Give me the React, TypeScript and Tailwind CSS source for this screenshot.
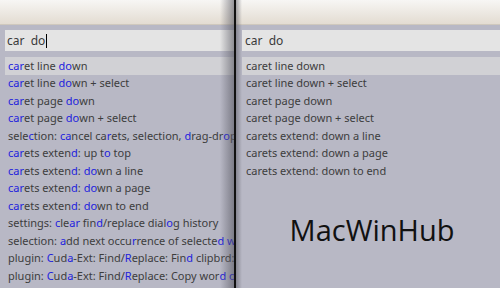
import React from "react";

type Seg = [string, boolean];

const leftItems: Seg[][] = [
  [["car", true], ["et line ", false], ["do", true], ["wn", false]],
  [["car", true], ["et line ", false], ["do", true], ["wn + select", false]],
  [["car", true], ["et page ", false], ["do", true], ["wn", false]],
  [["car", true], ["et page ", false], ["do", true], ["wn + select", false]],
  [["sele", false], ["c", true], ["tion: ", false], ["ca", true], ["ncel ca", false], ["r", true], ["ets, selection, ", false], ["d", true], ["rag-dr", false], ["o", true], ["p", false]],
  [["car", true], ["ets exten", false], ["d", true], [": up t", false], ["o", true], [" top", false]],
  [["car", true], ["ets exten", false], ["d", true], [": ", false], ["do", true], ["wn a line", false]],
  [["car", true], ["ets exten", false], ["d", true], [": ", false], ["do", true], ["wn a page", false]],
  [["car", true], ["ets exten", false], ["d", true], [": ", false], ["do", true], ["wn to end", false]],
  [["settings: ", false], ["c", true], ["le", false], ["ar", true], [" fin", false], ["d", true], ["/replace dial", false], ["o", true], ["g history", false]],
  [["selection: ", false], ["a", true], ["dd next occu", false], ["r", true], ["rence of selecte", false], ["d", true], [" ", false], ["w", true], ["ord", false]],
  [["plugin: ", false], ["C", true], ["ud", false], ["a", true], ["-Ext: Find/", false], ["R", true], ["eplace: Fin", false], ["d", true], [" clipbrd: ", false], ["o", true], ["ccurrence", false]],
  [["plugin: ", false], ["C", true], ["ud", false], ["a", true], ["-Ext: Find/", false], ["R", true], ["eplace: Copy wor", false], ["d", true], [" ", false], ["o", true], ["f caret", false]],
];

const rightItems = [
  "caret line down",
  "caret line down + select",
  "caret page down",
  "caret page down + select",
  "carets extend: down a line",
  "carets extend: down a page",
  "carets extend: down to end",
];

const font = { fontFamily: '"Noto Sans", "Open Sans", sans-serif' };

function TitleBar() {
  return <div className="h-[25px] shrink-0 bg-gradient-to-b from-[#f7f6f4] to-[#e3dcd2] border-b border-[#cfc8bd]" />;
}

export default function App() {
  return (
    <div className="w-[500px] h-[288px] flex overflow-hidden bg-[#b8b8c5]" style={font}>
      <div className="relative w-[234px] shrink-0 flex flex-col overflow-hidden">
        <TitleBar />
        <div className="flex-1 flex flex-col pl-[5px] pt-[5px]">
          <div className="h-[21px] w-[260px] bg-[#e4e4e4] flex items-center pl-[2px] text-[12px] text-[#3a3a3a] whitespace-pre shrink-0">
            <span>car  do</span>
            <span className="w-[1px] h-[14px] bg-black ml-[1px]" />
          </div>
          <div className="mt-[6px] flex flex-col text-[11px] text-[#3d3d3d]">
            {leftItems.map((segs, i) => (
              <div
                key={i}
                className={`h-[17.5px] flex items-center pl-[3px] whitespace-pre ${i === 0 ? "bg-[#d1d1d5]" : ""}`}
              >
                {segs.map(([t, hl], j) => (
                  <span key={j} className={hl ? "text-[#2222dd]" : ""}>
                    {t}
                  </span>
                ))}
              </div>
            ))}
          </div>
        </div>
        <div className="absolute top-0 right-0 h-full w-[14px] bg-gradient-to-r from-transparent to-[#55555f]/60" />
      </div>
      <div className="w-[2px] shrink-0 bg-[#111111]" />
      <div className="relative flex-1 flex flex-col">
        <TitleBar />
        <div className="flex-1 flex flex-col pl-[6px] pt-[5px]">
          <div className="h-[21px] bg-[#e4e4e4] flex items-center pl-[3px] text-[12px] text-[#3a3a3a] whitespace-pre shrink-0">
            car  do
          </div>
          <div className="mt-[6px] flex flex-col text-[11px] text-[#3d3d3d]">
            {rightItems.map((t, i) => (
              <div
                key={i}
                className={`h-[17.5px] flex items-center pl-[4px] whitespace-pre ${i === 0 ? "bg-[#d1d1d5]" : ""}`}
              >
                {t}
              </div>
            ))}
          </div>
          <div className="flex-1 flex items-center justify-center pb-[8px] pl-[2px]">
            <span className="text-[29px] text-[#111111]" style={{ fontFamily: '"Open Sans", "Noto Sans", sans-serif' }}>
              MacWinHub
            </span>
          </div>
        </div>
        <div className="absolute top-0 left-0 h-full w-[6px] bg-gradient-to-r from-[#55555f]/50 to-transparent" />
      </div>
    </div>
  );
}
